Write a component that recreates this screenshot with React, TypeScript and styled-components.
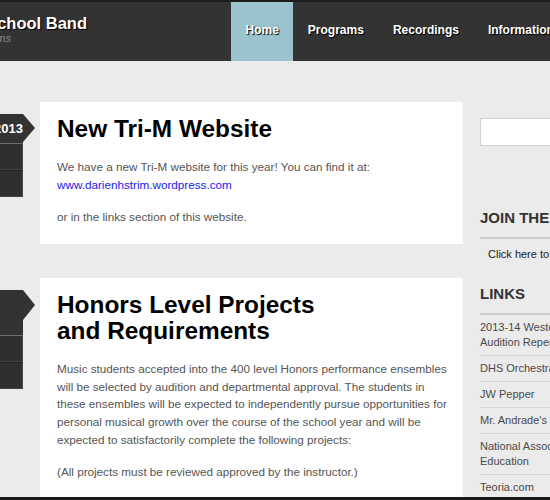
import React from "react";
import styled, { createGlobalStyle } from "styled-components";

const GlobalStyle = createGlobalStyle`
  html, body { margin: 0; padding: 0; }
  body {
    background: #ebebeb;
    font-family: "Liberation Sans", Arial, Helvetica, sans-serif;
    overflow: hidden;
  }
  * { box-sizing: border-box; }
`;

const Frame = styled.div`
  height: 100vh;
  display: flex;
  flex-direction: column;
  overflow: hidden;
`;

const TopBar = styled.header`
  flex: 0 0 61px;
  display: flex;
  align-items: stretch;
  background: #333;
  border-top: 2px solid #1c1c1c;
  overflow: hidden;
  white-space: nowrap;
`;

const Brand = styled.div`
  flex: 0 0 338px;
  margin-left: -111px;
  padding-top: 12px;
  display: flex;
  flex-direction: column;
`;

const SiteTitle = styled.div`
  font-size: 16.5px;
  line-height: 18px;
  font-weight: bold;
  color: #fff;
  text-shadow: 1px 1px 1px #000;
`;

const Tagline = styled.div`
  font-size: 11px;
  line-height: 13px;
  font-style: italic;
  color: #8a8a8a;
  margin-left: 7px;
`;

const Nav = styled.nav`
  display: flex;
  align-items: stretch;
  margin-left: 4px;
`;

const NavItem = styled.a<{ $active?: boolean }>`
  display: flex;
  align-items: center;
  padding: 0 14.5px 3px;
  font-size: 12px;
  font-weight: bold;
  color: #fff;
  text-decoration: none;
  text-shadow: 1px 1px 1px #000;
  background: ${(p) => (p.$active ? "#9bc3cd" : "transparent")};
`;

const Body = styled.main`
  flex: 1;
  display: flex;
  align-items: flex-start;
  padding-top: 41px;
  overflow: hidden;
`;

const MainCol = styled.div`
  flex: 0 0 auto;
  display: flex;
  flex-direction: column;
  gap: 34px;
`;

const Post = styled.article`
  display: flex;
  align-items: flex-start;
  gap: 17px;
`;

const DateCol = styled.div`
  flex: 0 0 80px;
  margin-left: -57px;
  padding-top: 12px;
  display: flex;
  flex-direction: column;
`;

const DateTab = styled.div<{ $tall?: boolean; $align?: "left" | "right" }>`
  position: relative;
  height: ${(p) => (p.$tall ? "45px" : "29px")};
  background: #333;
  color: #fff;
  font-size: 13px;
  font-weight: bold;
  line-height: 29px;
  text-align: ${(p) => p.$align ?? "right"};
  padding: 0 0 0 8px;
  white-space: nowrap;
  &::after {
    content: "";
    position: absolute;
    top: 0;
    right: -12px;
    border-left: 12px solid #333;
    border-top: ${(p) => (p.$tall ? "15px" : "14.5px")} solid transparent;
    border-bottom: ${(p) => (p.$tall ? "15px" : "14.5px")} solid transparent;
  }
`;

const DateBox = styled.div<{ $first?: boolean }>`
  height: 27px;
  background: #2f2f2f;
  border-top: 1px solid ${(p) => (p.$first ? "#6e6e6e" : "#222")};
  border-right: 1px solid #4a4a4a;
  border-bottom: 1px solid #444;
`;

const Card = styled.section`
  width: 423px;
  background: #fff;
  padding: 14px 13px 18px 17px;
`;

const CardTitle = styled.h2`
  margin: 0 0 16px;
  font-size: 24.4px;
  line-height: 26px;
  font-weight: bold;
  color: #000;
`;

const Para = styled.p`
  margin: 0 0 14.5px;
  font-size: 11.7px;
  line-height: 17.8px;
  color: #555;
  &:last-child { margin-bottom: 0; }
`;

const TextLink = styled.a`
  color: #1a1aee;
  text-decoration: none;
`;

const Sidebar = styled.aside`
  flex: 0 0 160px;
  min-width: 0;
  margin-left: 17px;
  padding-top: 16px;
  display: flex;
  flex-direction: column;
`;

const SearchBox = styled.input`
  width: 100%;
  height: 28px;
  border: 1px solid #d2d2d2;
  background: #fff;
  outline: none;
`;

const WidgetTitle = styled.h3<{ $space: number }>`
  margin: ${(p) => p.$space}px 0 0;
  padding-bottom: 10px;
  border-bottom: 2px solid #cdcdcd;
  font-size: 15px;
  line-height: 18px;
  font-weight: bold;
  color: #333;
  white-space: nowrap;
`;

const WidgetText = styled.div`
  margin-top: 8px;
  padding-left: 8px;
  font-size: 11px;
  line-height: 15px;
  color: #222;
  white-space: nowrap;
`;

const LinkList = styled.ul`
  list-style: none;
  margin: 0;
  padding: 0;
`;

const LinkItem = styled.li`
  padding: 5px 0;
  border-bottom: 1px solid #d6d6d6;
  font-size: 11px;
  line-height: 15px;
  color: #4a4a4a;
`;

const BottomEdge = styled.div`
  flex: 0 0 3px;
  background: #1a1a1a;
`;

const links = [
  "2013-14 Western Region Audition Repertoire",
  "DHS Orchestra",
  "JW Pepper",
  "Mr. Andrade's Band Blog",
  "National Association for Music Education",
  "Teoria.com",
];

export default function App() {
  return (
    <Frame>
      <GlobalStyle />
      <TopBar>
        <Brand>
          <SiteTitle>Darien High School Band</SiteTitle>
          <Tagline>Darien Music Programs</Tagline>
        </Brand>
        <Nav>
          <NavItem $active>Home</NavItem>
          <NavItem>Programs</NavItem>
          <NavItem>Recordings</NavItem>
          <NavItem>Information</NavItem>
          <NavItem>Contact</NavItem>
        </Nav>
      </TopBar>
      <Body>
        <MainCol>
          <Post>
            <DateCol>
              <DateTab>Sep 2013</DateTab>
              <DateBox $first />
              <DateBox />
            </DateCol>
            <Card>
              <CardTitle>New Tri-M Website</CardTitle>
              <Para>
                We have a new Tri-M website for this year! You can find it at:
                <br />
                <TextLink>www.darienhstrim.wordpress.com</TextLink>
              </Para>
              <Para>or in the links section of this website.</Para>
            </Card>
          </Post>
          <Post>
            <DateCol>
              <DateTab $tall $align="left">Jun</DateTab>
              <DateBox $first />
              <DateBox />
            </DateCol>
            <Card>
              <CardTitle>
                Honors Level Projects
                <br />
                and Requirements
              </CardTitle>
              <Para>
                Music students accepted into the 400 level Honors performance
                ensembles will be selected by audition and departmental
                approval. The students in these ensembles will be expected to
                independently pursue opportunities for personal musical growth
                over the course of the school year and will be expected to
                satisfactorily complete the following projects:
              </Para>
              <Para>(All projects must be reviewed approved by the instructor.)</Para>
            </Card>
          </Post>
        </MainCol>
        <Sidebar>
          <SearchBox type="text" aria-label="Search" />
          <WidgetTitle $space={63}>JOIN THE MAILING LIST</WidgetTitle>
          <WidgetText>Click here to subscribe</WidgetText>
          <WidgetTitle $space={23}>LINKS</WidgetTitle>
          <LinkList>
            {links.map((l) => (
              <LinkItem key={l}>{l}</LinkItem>
            ))}
          </LinkList>
        </Sidebar>
      </Body>
      <BottomEdge />
    </Frame>
  );
}
